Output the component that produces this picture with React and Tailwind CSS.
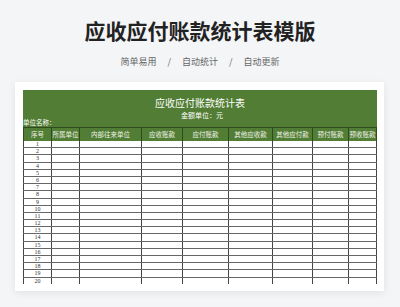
const cols = [
  { name: "序号", w: 29 },
  { name: "所属单位", w: 28 },
  { name: "内部往来单位", w: 62 },
  { name: "应收账款", w: 41 },
  { name: "应付账款", w: 46 },
  { name: "其他应收款", w: 44 },
  { name: "其他应付款", w: 40 },
  { name: "预付账款", w: 36 },
  { name: "预收账款", w: 28 },
];

const rows = Array.from({ length: 20 }, (_, i) => i + 1);

export default function App() {
  return (
    <div className="w-[400px] h-[307px] overflow-hidden bg-[#f4f5f7] font-['Noto_Sans_CJK_SC',sans-serif]">
      <div className="pt-[16px] text-center">
        <h1 className="text-[21px] leading-[28px] font-bold text-[#222]">应收应付账款统计表模版</h1>
        <div className="mt-[12px] flex justify-center items-center gap-[11px] text-[9px] leading-[12px] text-[#666]">
          <span>简单易用</span>
          <span>/</span>
          <span>自动统计</span>
          <span>/</span>
          <span>自动更新</span>
        </div>
      </div>

      <div className="mt-[14px] mx-[15px] w-[369px] h-[209px] bg-white shadow-[0_2px_8px_rgba(0,0,0,0.08)] pt-[8px] pl-[8px]">
        <div className="w-[354px] h-[194px] overflow-hidden">
          <div className="h-[37px] bg-[#527d34] text-white relative">
            <div className="pt-[7px] text-center text-[10px] leading-[12px]">应收应付账款统计表</div>
            <div className="mt-[2px] text-center text-[7px] leading-[9px] pl-[4px]">金额单位：元</div>
            <div className="absolute left-[0px] bottom-[1px] text-[6.5px] leading-[8px]">单位名称：</div>
          </div>
          <div className="flex h-[14px] bg-[#527d34] border-t border-[#2f4a1e]">
            {cols.map((c, i) => (
              <div
                key={c.name}
                style={{ width: c.w }}
                className={`flex items-center justify-center text-[6.5px] text-[#eef3e8] border-r border-[#2f4a1e] ${i === 0 ? "border-l" : ""}`}
              >
                {c.name}
              </div>
            ))}
          </div>
          <div>
            {rows.map((r) => (
              <div key={r} className="flex h-[7.2px] border-b border-[#666]">
                {cols.map((c, i) => (
                  <div
                    key={c.name}
                    style={{ width: c.w }}
                    className={`border-r border-[#444] text-center text-[6px] leading-[6px] text-[#333] font-['Liberation_Serif',serif] ${i === 0 ? "border-l" : ""}`}
                  >
                    {i === 0 ? r : ""}
                  </div>
                ))}
              </div>
            ))}
          </div>
        </div>
      </div>
    </div>
  );
}
